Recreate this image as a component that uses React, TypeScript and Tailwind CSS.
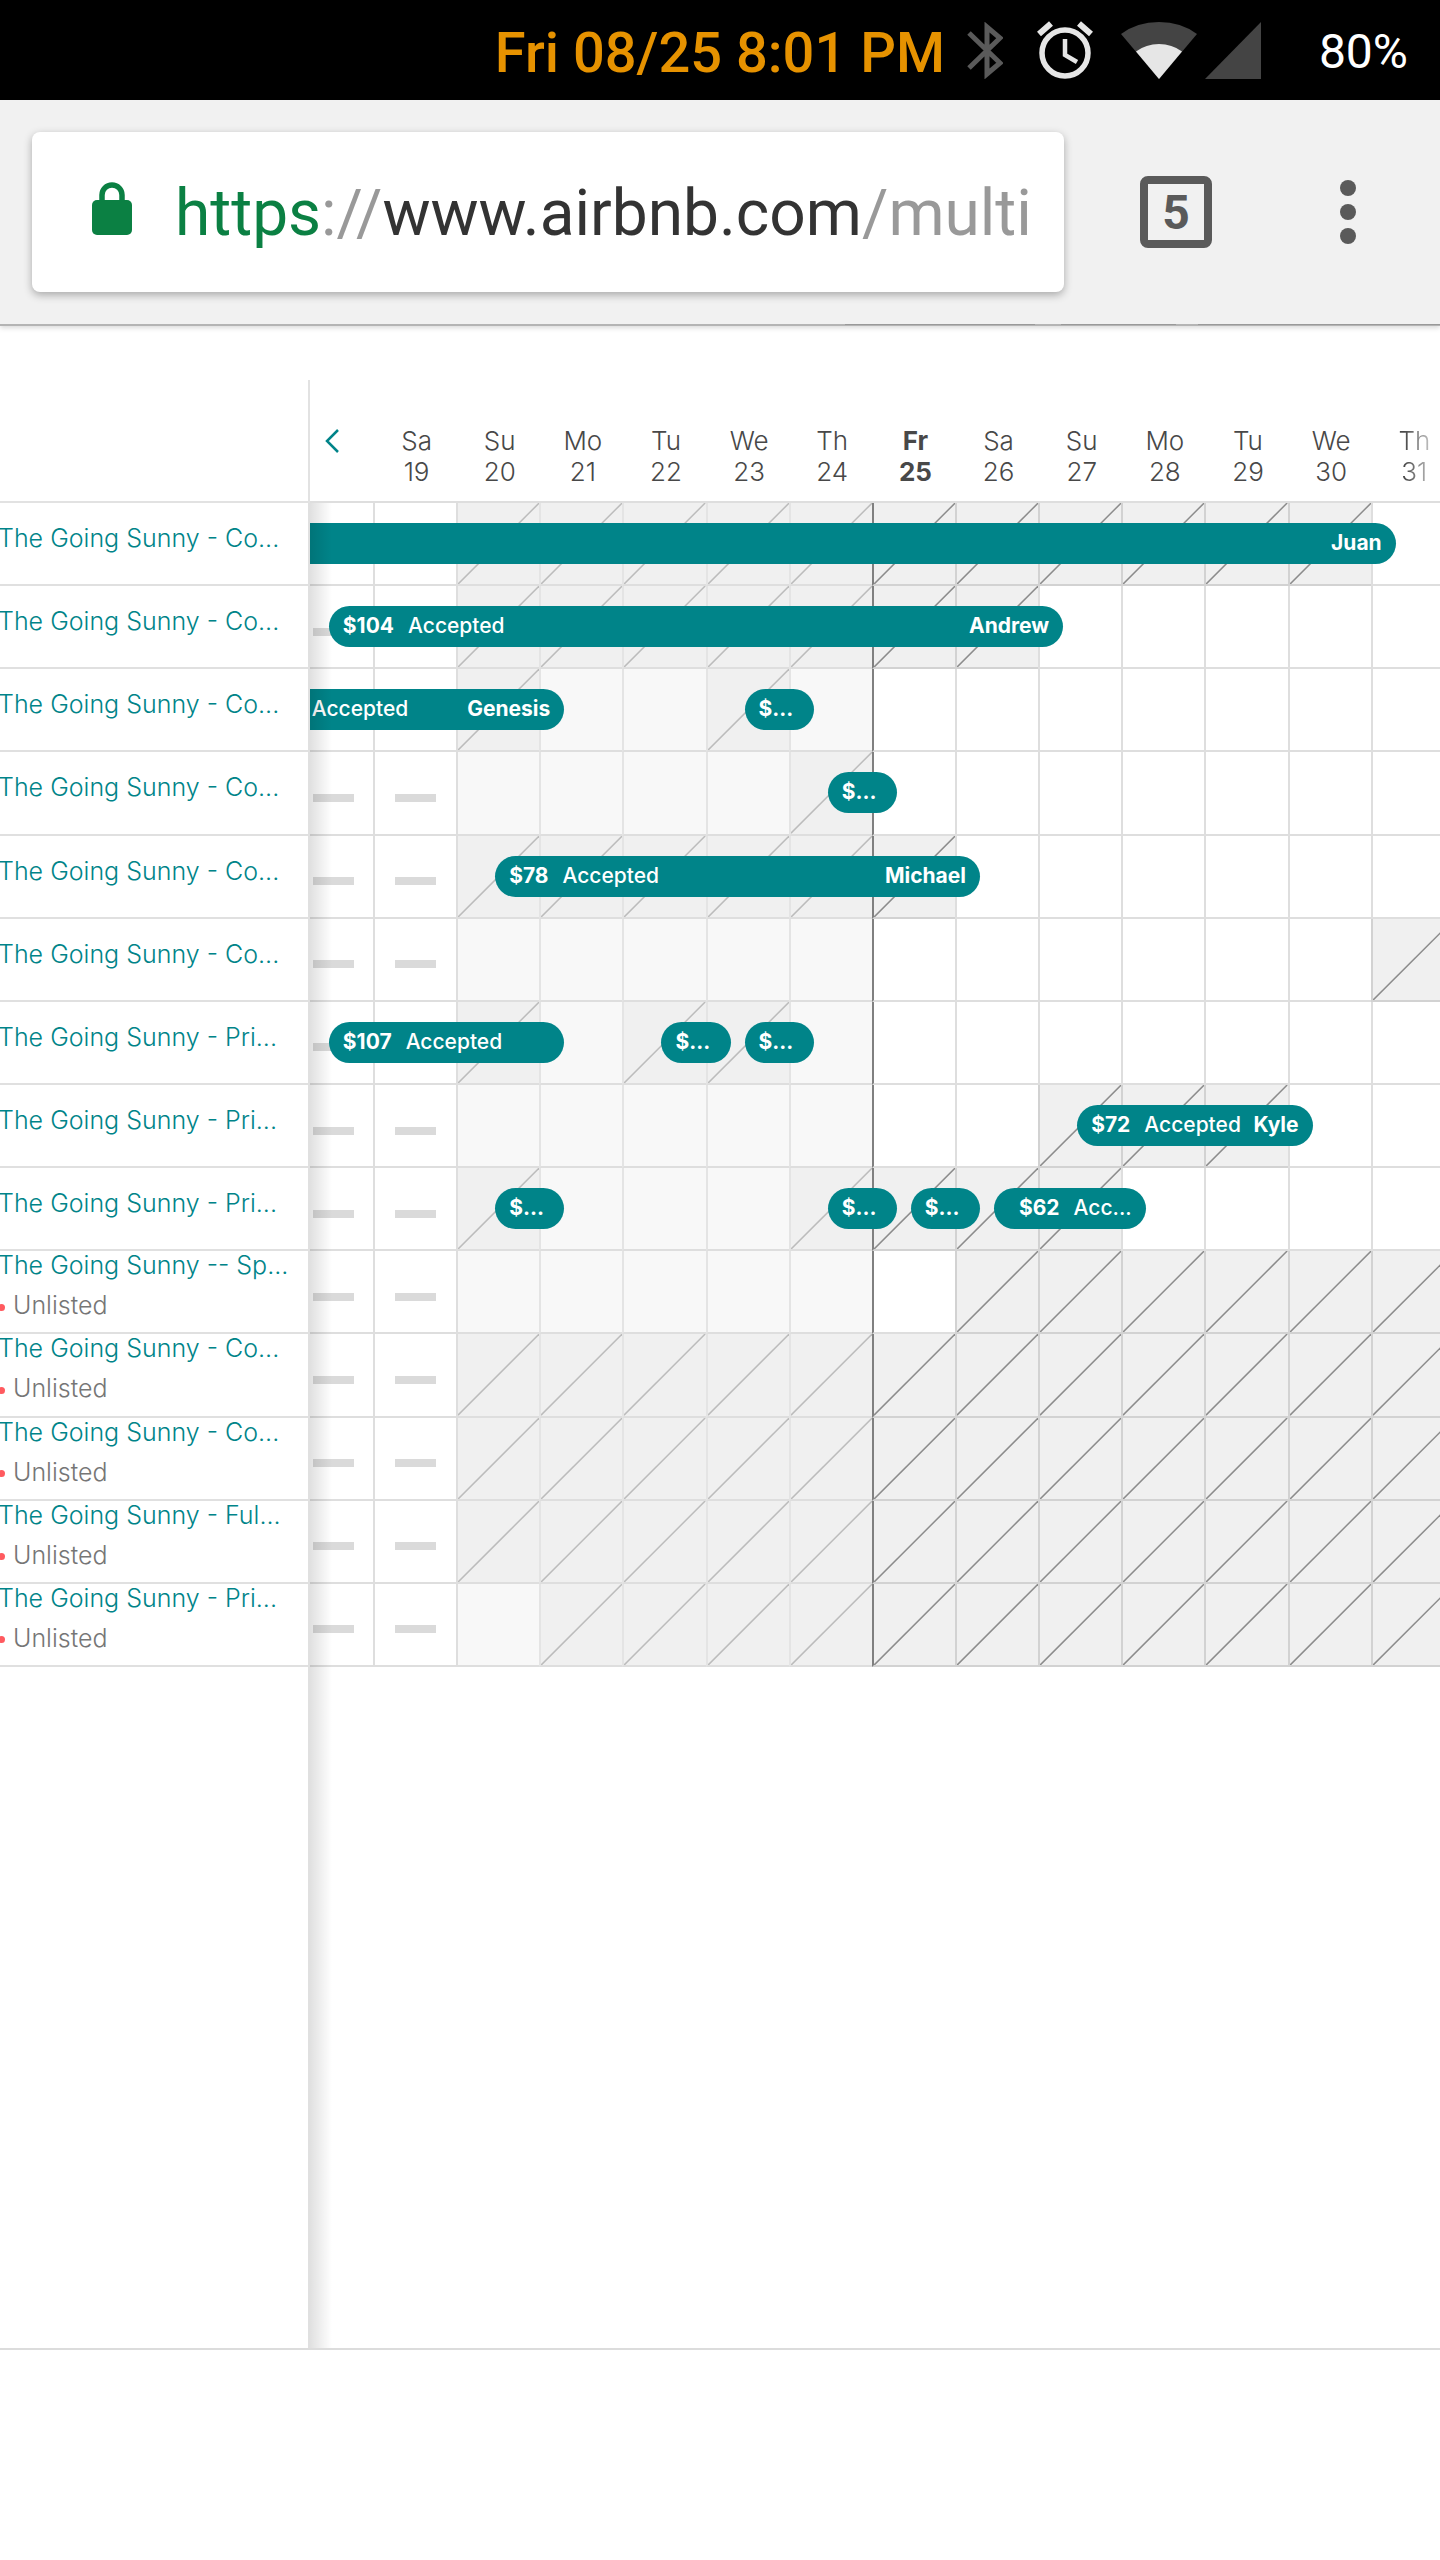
type Booking = {
  end: number
  nights: number
  price?: string
  status?: string
  guest?: string
  padding?: string
}

type Listing = {
  name: string
  unlisted?: boolean
  blocked: [number, number][]
  bookings?: Booking[]
}

const TODAY = 25
const FIRST_PRICED_DAY = 20

const days = [
  { day: 19, label: 'Sa' },
  { day: 20, label: 'Su' },
  { day: 21, label: 'Mo' },
  { day: 22, label: 'Tu' },
  { day: 23, label: 'We' },
  { day: 24, label: 'Th' },
  { day: 25, label: 'Fr' },
  { day: 26, label: 'Sa' },
  { day: 27, label: 'Su' },
  { day: 28, label: 'Mo' },
  { day: 29, label: 'Tu' },
  { day: 30, label: 'We' },
  { day: 31, label: 'Th' }
]

const listings: Listing[] = [
  {
    name: 'The Going Sunny - Co...',
    blocked: [[20, 30]],
    bookings: [{ end: 31, nights: 15, guest: 'Juan' }]
  },
  {
    name: 'The Going Sunny - Co...',
    blocked: [[20, 26]],
    bookings: [
      { end: 27, nights: 9, price: '$104', status: 'Accepted', guest: 'Andrew' }
    ]
  },
  {
    name: 'The Going Sunny - Co...',
    blocked: [
      [20, 20],
      [23, 23]
    ],
    bookings: [
      {
        end: 21,
        nights: 4,
        status: 'Accepted',
        guest: 'Genesis',
        padding: 'pl-[52px]'
      },
      { end: 24, nights: 1, price: '$...' }
    ]
  },
  {
    name: 'The Going Sunny - Co...',
    blocked: [[24, 24]],
    bookings: [{ end: 25, nights: 1, price: '$...' }]
  },
  {
    name: 'The Going Sunny - Co...',
    blocked: [[20, 25]],
    bookings: [
      { end: 26, nights: 6, price: '$78', status: 'Accepted', guest: 'Michael' }
    ]
  },
  { name: 'The Going Sunny - Co...', blocked: [[31, 31]] },
  {
    name: 'The Going Sunny - Pri...',
    blocked: [
      [20, 20],
      [22, 23]
    ],
    bookings: [
      { end: 21, nights: 3, price: '$107', status: 'Accepted' },
      { end: 23, nights: 1, price: '$...' },
      { end: 24, nights: 1, price: '$...' }
    ]
  },
  {
    name: 'The Going Sunny - Pri...',
    blocked: [[27, 29]],
    bookings: [
      { end: 30, nights: 3, price: '$72', status: 'Accepted', guest: 'Kyle' }
    ]
  },
  {
    name: 'The Going Sunny - Pri...',
    blocked: [
      [20, 20],
      [24, 27]
    ],
    bookings: [
      { end: 21, nights: 1, price: '$...' },
      { end: 25, nights: 1, price: '$...' },
      { end: 26, nights: 1, price: '$...' },
      {
        end: 28,
        nights: 2,
        price: '$62',
        status: 'Acc...',
        padding: 'pl-[25px]'
      }
    ]
  },
  { name: 'The Going Sunny -- Sp...', unlisted: true, blocked: [[26, 31]] },
  { name: 'The Going Sunny - Co...', unlisted: true, blocked: [[20, 31]] },
  { name: 'The Going Sunny - Co...', unlisted: true, blocked: [[20, 31]] },
  { name: 'The Going Sunny - Ful...', unlisted: true, blocked: [[20, 31]] },
  { name: 'The Going Sunny - Pri...', unlisted: true, blocked: [[21, 31]] }
]

function StatusBar() {
  return (
    <div className="flex h-[100px] items-center justify-end bg-black pr-8 font-['Roboto',sans-serif]">
      <span className="mr-[22px] pt-[6px] text-[56px] leading-none font-medium text-[#e69200]">
        Fri 08/25 8:01 PM
      </span>
      <svg
        viewBox="0 0 36 57"
        className="h-[57px] w-9"
        fill="none"
        stroke="#5a5a5a"
        strokeWidth="5"
      >
        <path d="M2 11 33 41 20 52V5L33 16 2 46" />
      </svg>
      <svg
        viewBox="0 0 56 58"
        className="ml-[34px] h-[58px] w-[56px]"
        fill="none"
        stroke="#e6e6e6"
      >
        <circle cx="28" cy="32" r="23" strokeWidth="5.5" />
        <path d="M2 13 14 2.5M54 13 42 2.5" strokeWidth="6" />
        <path d="M28 18v16l12 7" strokeWidth="4.5" />
      </svg>
      <svg viewBox="0 0 76 57" className="ml-7 h-[57px] w-[76px]">
        <path d="M38 57 0 12Q16 0 38 0t38 12Z" fill="#444" />
        <path d="M38 57 15 29.500Q25 22 38 22t23 7.500Z" fill="#e6e6e6" />
      </svg>
      <svg viewBox="0 0 56 57" className="ml-2 h-[57px] w-[56px]">
        <path d="M56 0v57H0Z" fill="#444" />
      </svg>
      <span className="ml-[58px] pt-[3px] text-[48px] leading-none text-white">
        80%
      </span>
    </div>
  )
}

function BrowserBar() {
  return (
    <header className="relative z-30 flex h-[226px] items-center border-b-2 border-[#b4b4b4] bg-[#f1f1f1] pl-8 pr-[76px] font-['Roboto',sans-serif] shadow-[0_2px_5px_rgba(0,0,0,0.15)]">
      <div className="flex h-[160px] min-w-0 flex-1 items-center rounded-lg bg-white pl-[60px] shadow-[0_3px_8px_rgba(0,0,0,0.3)]">
        <svg viewBox="0 0 40 53" className="mb-2 h-[53px] w-[40px] shrink-0">
          <rect y="18" width="40" height="35" rx="5" fill="#0b8043" />
          <path
            d="M10 20V13a10 10 0 0 1 20 0v7"
            fill="none"
            stroke="#0b8043"
            strokeWidth="5.500"
          />
        </svg>
        <a
          href="https://www.airbnb.com/multi"
          className="ml-[43px] overflow-hidden pt-1 text-[64px] leading-[80px] whitespace-nowrap text-[#333]"
        >
          <span className="text-[#0b8043]">https</span>
          <span className="text-[#999]">://</span>
          www.airbnb.com
          <span className="text-[#999]">/multi</span>
        </a>
      </div>
      <button
        type="button"
        aria-label="Open tabs"
        className="ml-[76px] flex size-[72px] items-center justify-center rounded-lg border-8 border-[#5a5a5a] pt-[2px] font-['Roboto',sans-serif] text-[48px] leading-none font-bold text-[#5a5a5a]"
      >
        5
      </button>
      <button
        type="button"
        aria-label="Menu"
        className="ml-[120px] flex w-8 flex-col items-center gap-2"
      >
        <span className="size-4 rounded-full bg-[#5a5a5a]" />
        <span className="size-4 rounded-full bg-[#5a5a5a]" />
        <span className="size-4 rounded-full bg-[#5a5a5a]" />
      </button>
      <div className="absolute inset-x-0 top-full flex h-px justify-end">
        <span className="mr-[26px] w-[190px] bg-[#999]" />
        <span className="mr-[22px] w-[115px] bg-[#999]" />
        <span className="w-[242px] bg-[#999]" />
      </div>
    </header>
  )
}

function BookingBar({ booking }: { booking: Booking }) {
  const { nights, price, status, guest, padding = 'pl-[14px]' } = booking
  return (
    <div
      className={`absolute top-[20px] -right-[25px] z-10 flex h-[41px] items-center rounded-full bg-[#008489] pr-[14px] pb-[2px] text-[21px] leading-none font-medium whitespace-nowrap text-white ${padding}`}
      // each night is one cell plus its 2px border
      style={{ width: `calc(${nights * 100}% + ${nights * 2 - 14}px)` }}
    >
      {price && <span className="font-bold">{price}</span>}
      {status && <span className="ml-[14px]">{status}</span>}
      {guest && <span className="ml-auto font-bold">{guest}</span>}
    </div>
  )
}

function DayCell({ listing, day }: { listing: Listing; day: number }) {
  const isBlocked = listing.blocked.some(
    ([from, to]) => day >= from && day <= to
  )
  const isPast = day < TODAY
  const booking = listing.bookings?.find((b) => b.end - 1 === day)

  let background = 'bg-white'
  if (isBlocked) background = 'bg-[#f0f0f0]'
  else if (isPast && day >= FIRST_PRICED_DAY) background = 'bg-[#f8f8f8]'

  let border = 'border-l-[#dedede]'
  if (day === TODAY) border = 'border-l-[#808080]'
  else if (isPast && day > FIRST_PRICED_DAY) border = 'border-l-[#e4e4e4]'
  else if (isBlocked && !isPast) border = 'border-l-[#d2d2d2]'

  return (
    <td
      className={`relative h-[83px] border-b-2 border-l-2 p-0 ${background} ${border} ${
        isBlocked && !isPast ? 'border-b-[#d2d2d2]' : 'border-b-[#dedede]'
      }`}
    >
      {day < FIRST_PRICED_DAY && (
        <div className="mx-auto mt-[10px] h-2 w-[41px] bg-[#dadada]" />
      )}
      {isBlocked && (
        <svg
          viewBox="0 0 81 81"
          preserveAspectRatio="none"
          className="absolute inset-0 size-full"
        >
          <path
            d="M0 81 81 0"
            stroke={isPast ? '#bcbcbc' : '#8c8c8c'}
            strokeWidth="1.500"
          />
        </svg>
      )}
      {booking && <BookingBar booking={booking} />}
    </td>
  )
}

function Calendar() {
  return (
    <table className="h-[1287px] w-[calc(100%+14px)] table-fixed border-separate border-spacing-0">
      <colgroup>
        <col className="w-[310px]" />
        <col className="w-[63px]" />
        {days.map(({ day }) => (
          <col key={day} />
        ))}
      </colgroup>
      <thead>
        <tr className="text-[26px] leading-[31px] font-light text-[#484848]">
          <td className="h-[123px] border-r-2 border-b-2 border-[#e2e2e2] p-0" />
          <td className="border-b-2 border-[#dedede] p-0 align-top">
            <button
              type="button"
              aria-label="Previous days"
              className="mt-[48px] ml-[14px] block"
            >
              <svg
                viewBox="0 0 16 26"
                className="h-[26px] w-[16px]"
                fill="none"
                stroke="#008489"
                strokeWidth="2.500"
              >
                <path d="M14 2 3 13l11 11" />
              </svg>
            </button>
          </td>
          {days.map(({ day, label }) => (
            <th
              key={day}
              className={`border-b-2 border-[#dedede] p-0 pt-[45px] pl-1 text-center align-top ${
                day === TODAY ? 'font-bold' : 'font-light'
              } ${
                day === 31
                  ? 'bg-linear-to-r from-[#484848] from-40% to-white to-85% bg-clip-text text-transparent'
                  : ''
              }`}
            >
              {label}
              <br />
              {day}
            </th>
          ))}
        </tr>
      </thead>
      <tbody>
        {listings.map((listing, index) => (
          <tr key={index}>
            <th className="relative z-20 h-[83px] border-r-2 border-b-2 border-[#e0e0e0] bg-white p-0 text-left align-top text-[25px] leading-[40px] font-light whitespace-nowrap">
              <a
                href="#listing"
                className={`-ml-[2px] block text-[#008489] ${
                  listing.unlisted ? '-mt-[6px]' : 'mt-[15px]'
                }`}
              >
                {listing.name}
              </a>
              {listing.unlisted && (
                <span className="flex items-center text-[#767676]">
                  <span className="mt-1 -ml-[2px] mr-2 size-[7px] rounded-full bg-[#ff5a5f]" />
                  Unlisted
                </span>
              )}
            </th>
            <td className="border-b-2 border-[#dedede] p-0">
              <div className="mt-[10px] mr-[19px] ml-auto h-2 w-[41px] bg-[#dadada]" />
            </td>
            {days.map(({ day }) => (
              <DayCell key={day} listing={listing} day={day} />
            ))}
          </tr>
        ))}
      </tbody>
    </table>
  )
}

export default function App() {
  return (
    <div className="flex min-h-screen flex-col bg-white font-['Inter',sans-serif]">
      <StatusBar />
      <BrowserBar />
      <main className="relative mt-[54px] flex-1 overflow-hidden">
        <Calendar />
        {/* edge of the listing column, runs on below the last row */}
        <div className="pointer-events-none absolute top-[123px] bottom-0 left-[308px] z-20 w-6 border-l-2 border-[#e0e0e0] bg-linear-to-r from-black/12 to-transparent" />
      </main>
      <footer className="h-[212px] border-t-2 border-[#dcdcdc]" />
    </div>
  )
}
